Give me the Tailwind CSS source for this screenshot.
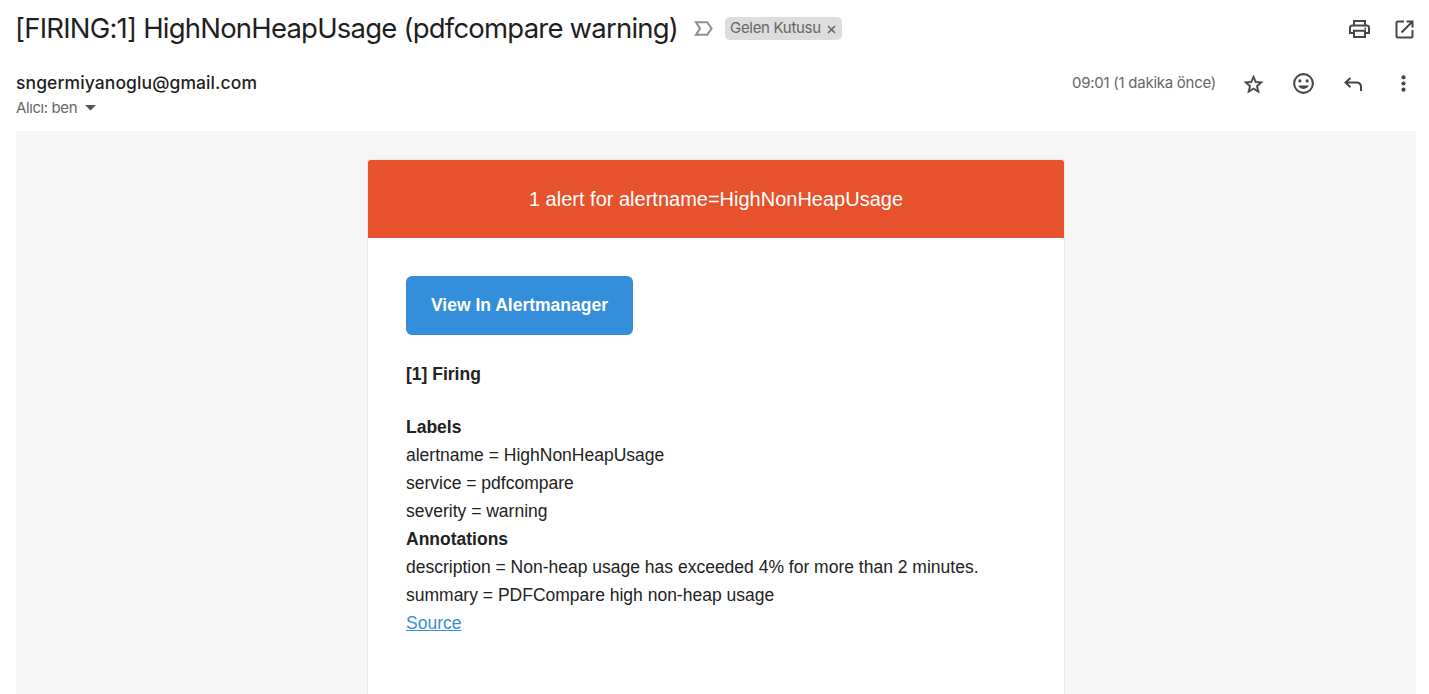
<!DOCTYPE html>
<html lang="tr">
<head>
<meta charset="utf-8">
<title>[FIRING:1] HighNonHeapUsage</title>
<script src="https://cdn.jsdelivr.net/npm/@tailwindcss/browser@4"></script>
</head>
<body class="bg-white w-[1429px] h-[694px] overflow-hidden font-['Liberation_Sans',sans-serif] text-[#222]">
<div class="flex flex-col h-full px-4">
  <header class="h-14 flex items-center shrink-0">
    <h1 class="-ml-px w-[662px] text-[27.5px] leading-[36px] whitespace-nowrap text-[#1f1f1f] font-['Inter',sans-serif] font-normal tracking-[-0.79px]">[FIRING:1] HighNonHeapUsage (pdfcompare warning)</h1>
    <svg class="ml-[17px] mt-px w-[19px] h-[15px] shrink-0" viewBox="0 0 19 15" fill="none" stroke="#8e8e8e" stroke-width="2"><path d="M2 1.2H13.2L17.6 7.5L13.2 13.8H2L6 7.5Z"/></svg>
    <div class="ml-3 mt-px w-[117px] h-[23px] bg-[#ddd] rounded-[5px] flex items-center pl-[5px] text-[#666] shrink-0">
      <span class="w-[91px] pb-px text-[15px] leading-5 tracking-[-0.3px] whitespace-nowrap font-['Inter',sans-serif]">Gelen Kutusu</span>
      <svg class="ml-[6px] mt-[1px] w-[9px] h-[9px]" viewBox="0 0 9 9" stroke="#666" stroke-width="1.6"><path d="M1 1L8 8M8 1L1 8"/></svg>
    </div>
    <svg class="ml-auto mt-[2px] w-[21px] h-[18px] shrink-0" viewBox="0 0 21 18" fill="none" stroke="#444746" stroke-width="2"><path d="M5 5V1H16V5M5 13H1V8Q1 5.6 3.4 5.6H17.6Q20 5.6 20 8V13H16M5 10.8H16V17H5Z"/><circle cx="16.3" cy="8.6" r="1" fill="#444746" stroke="none"/></svg>
    <svg class="ml-[25px] mr-[-1px] mt-[3px] w-[19px] h-[19px] shrink-0" viewBox="0 0 19 19" fill="none" stroke="#444746" stroke-width="2"><path d="M9 1.5H3Q1.5 1.5 1.5 3V16Q1.5 17.5 3 17.5H16Q17.5 17.5 17.5 16V10M11.5 1.5H17.5V7.5M17 2L6.5 12.5"/></svg>
  </header>
  <section class="h-[75px] flex justify-between shrink-0">
    <div class="pt-[15px]">
      <div class="text-[17.5px] leading-6 whitespace-nowrap tracking-[0.1px] font-medium text-[#1f1f1f] font-['Inter',sans-serif]"><span>sngermiyanoglu@gmail.com</span></div>
      <div class="flex items-center text-[15px] leading-[26px] text-[#666] font-['Inter',sans-serif]"><span class="w-[62px] whitespace-nowrap tracking-[-0.4px]">Alıcı: ben</span><svg class="ml-[7px] w-[11px] h-[6px]" viewBox="0 0 11 6" fill="#555"><path d="M0 0H11L5.5 5.6Z"/></svg></div>
    </div>
    <div class="flex items-center h-[54px] text-[#444746]">
      <span class="w-[144px] text-[15px] tracking-[-0.26px] whitespace-nowrap text-[#666] font-['Inter',sans-serif]">09:01 (1 dakika önce)</span>
      <svg class="ml-[26px] mt-[3px] w-[23px] h-[23px]" viewBox="0 0 24 24" fill="#444746" stroke="#444746" stroke-width=".4"><path d="M22 9.24l-7.19-.62L12 2 9.19 8.63 2 9.24l5.46 4.73L5.82 21 12 17.27 18.18 21l-1.63-7.03L22 9.24zM12 15.4l-3.76 2.27 1-4.28-3.32-2.88 4.38-.38L12 6.1l1.71 4.04 4.38.38-3.32 2.88 1 4.28L12 15.4z"/></svg>
      <svg class="ml-[26px] w-[25px] h-[25px]" viewBox="0 0 24 24"><circle cx="12" cy="12" r="9" fill="none" stroke="#444746" stroke-width="2"/><circle cx="8.5" cy="9.5" r="1.5" fill="#444746"/><circle cx="15.5" cy="9.5" r="1.5" fill="#444746"/><path d="M7 14H17Q15.6 17.2 12 17.2T7 14Z" fill="#444746"/></svg>
      <svg class="ml-[28px] mt-[2px] w-[18px] h-[14px]" viewBox="0 0 18 14" fill="none" stroke="#444746" stroke-width="2"><path d="M6.5 1L1.5 5.5L6.5 10.2M1.5 5.5H12.5Q17 5.5 17 10V14"/></svg>
      <svg class="ml-[39px] mr-[7px] mt-px w-[5px] h-[17px]" viewBox="0 0 5 17" fill="#444746"><circle cx="2.5" cy="2.3" r="2.1"/><circle cx="2.5" cy="8.5" r="2.1"/><circle cx="2.5" cy="14.7" r="2.1"/></svg>
    </div>
  </section>
  <main class="w-[1400px] grow bg-[#f6f6f6] pt-7 pl-[351px]">
    <article class="w-[698px] h-full bg-white border border-b-0 border-[#e9e9e9] rounded-t-[4px] overflow-hidden">
      <div class="h-[78px] bg-[#e6522c] text-white text-[20px] flex items-center justify-center">1 alert for alertname=HighNonHeapUsage</div>
      <div class="pt-[38px] pl-[38px] text-[17.5px] leading-7 whitespace-nowrap">
        <a class="flex items-center justify-center w-[227px] h-[59px] rounded-[6px] bg-[#348eda] text-white font-bold pb-[2px]">View In Alertmanager</a>
        <p class="mt-[25px] font-bold">[1] Firing</p>
        <div class="mt-[25px]">
          <p class="font-bold">Labels</p>
          <p>alertname = HighNonHeapUsage</p>
          <p>service = pdfcompare</p>
          <p>severity = warning</p>
          <p class="font-bold">Annotations</p>
          <p>description = Non-heap usage has exceeded 4% for more than 2 minutes.</p>
          <p>summary = PDFCompare high non-heap usage</p>
          <a class="text-[#348eda] underline">Source</a>
        </div>
      </div>
    </article>
  </main>
</div>
</body>
</html>
